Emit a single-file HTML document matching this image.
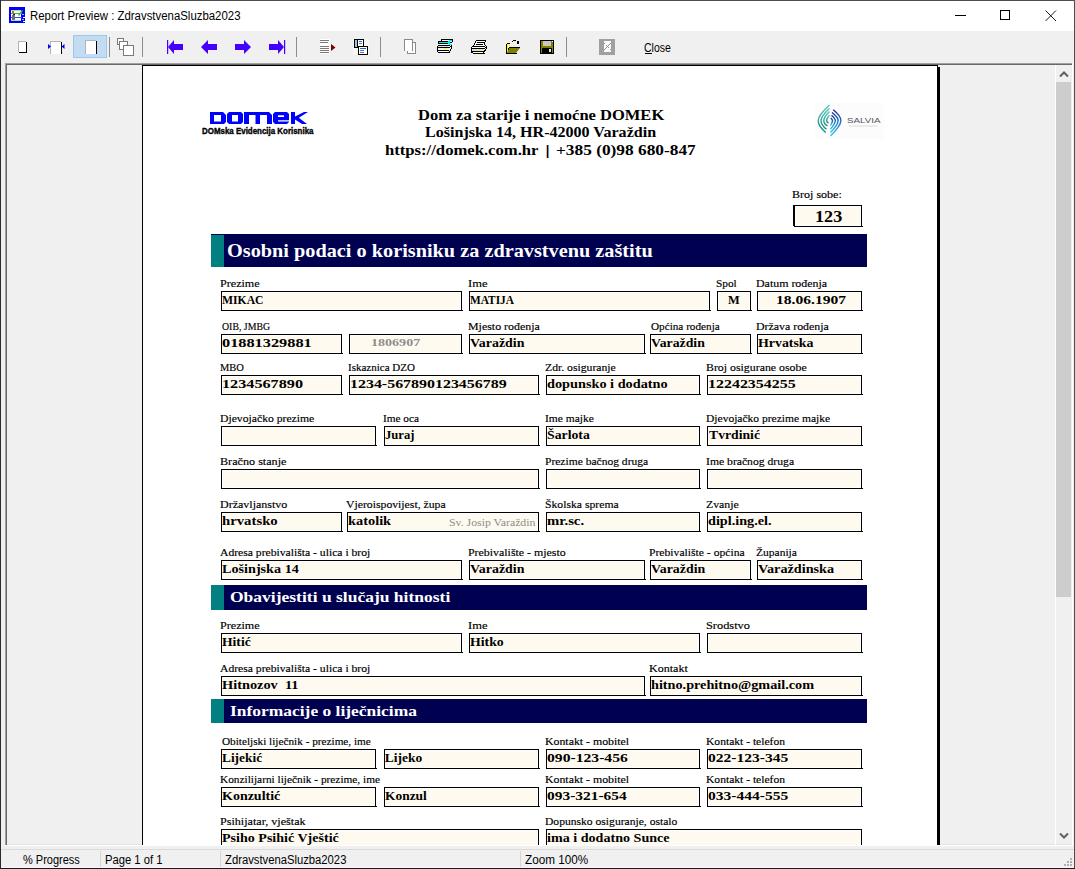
<!DOCTYPE html>
<html><head><meta charset="utf-8"><style>
html,body{margin:0;padding:0;width:1075px;height:869px;overflow:hidden;background:#f0f0f0;position:relative}
.tx{position:absolute;white-space:pre;line-height:normal;transform-origin:0 0}
.fb{position:absolute;box-sizing:border-box;background:#fffaf0;border:1px solid #000;box-shadow:inset 0 0 0 1px #fff}
.r{position:absolute}
</style></head><body>
<!-- window frame -->
<div class="r" style="left:0;top:0;width:1075px;height:31px;background:#fff"></div>
<div class="r" style="left:0;top:0;width:1075px;height:1px;background:#4d4d4d"></div>
<div class="r" style="left:0;top:0;width:1px;height:869px;background:#2b2b2b"></div>
<div class="r" style="left:1074px;top:0;width:1px;height:869px;background:#4d4d4d"></div>
<div class="r" style="left:0;top:868px;width:1075px;height:1px;background:#1a1a1a"></div>
<!-- app icon -->
<svg class="r" style="left:9px;top:7px" width="17" height="17" viewBox="0 0 17 17" shape-rendering="crispEdges">
<rect x="0" y="0" width="16" height="16" fill="#0000ff"/>
<rect x="2" y="3" width="10" height="11" fill="#fff"/>
<rect x="2" y="3" width="10" height="1" fill="#a8e0a0"/>
<rect x="2" y="6" width="11" height="1" fill="#40b040"/>
<rect x="2" y="10" width="11" height="1" fill="#4040ff"/>
<rect x="2" y="13" width="10" height="1" fill="#a8e0a0"/>
<rect x="3" y="4" width="2" height="2" fill="#ff4060"/>
<rect x="3" y="8" width="3" height="5" fill="#707070"/>
<rect x="4" y="7" width="2" height="1" fill="#202020"/>
<path d="M9 8 L13 3 L14 4 L10 9 Z" fill="#40b040" shape-rendering="auto"/>
<rect x="13" y="7" width="2" height="1" fill="#c0b0ff"/>
<rect x="14" y="10" width="2" height="1" fill="#fff"/>
<rect x="13" y="12" width="2" height="1" fill="#c0b0ff"/>
<rect x="14" y="14" width="2" height="1" fill="#fff"/>
</svg>
<!-- title controls -->
<div class="r" style="left:955px;top:15px;width:11px;height:1px;background:#000"></div>
<div class="r" style="left:1000px;top:10px;width:10px;height:10px;border:1px solid #000;box-sizing:border-box"></div>
<svg class="r" style="left:1044px;top:9px" width="14" height="13" viewBox="0 0 14 13"><path d="M1.5 1.5 L12 12 M12 1.5 L1.5 12" stroke="#000" stroke-width="0.9"/></svg>

<!-- toolbar -->
<svg class="r" style="left:0;top:31px" width="700" height="30" viewBox="0 31 700 30" shape-rendering="crispEdges">
<!-- icon1 -->
<rect x="18" y="41" width="8" height="11" fill="#b4b4b4"/>
<rect x="19" y="42" width="7" height="10" fill="#fff"/>
<rect x="26" y="42" width="1" height="11" fill="#000"/>
<rect x="19" y="52" width="8" height="1" fill="#000"/>
<!-- icon2 -->
<rect x="50" y="41" width="11" height="13" fill="#b4b4b4"/>
<rect x="51" y="42" width="10" height="12" fill="#fff"/>
<rect x="61" y="42" width="1" height="12" fill="#000"/>
<path d="M48 44 L51 46.5 L48 49 Z" fill="#0000ff" shape-rendering="auto"/>
<path d="M64.5 44 L61.5 46.5 L64.5 49 Z" fill="#0000ff" shape-rendering="auto"/>
<!-- icon3 selected -->
<rect x="73" y="35" width="34" height="23" fill="#99c9f3"/>
<rect x="74" y="36" width="32" height="21" fill="#c4dcf1"/>
<rect x="85" y="40" width="11" height="14" fill="#b4b4b4"/>
<rect x="86" y="41" width="10" height="13" fill="#fff"/>
<rect x="96" y="41" width="1" height="13" fill="#000"/>
<!-- sep -->
<rect x="109" y="37" width="1" height="20" fill="#8c8c8c"/>
<!-- icon4 -->
<rect x="117.5" y="38.5" width="6" height="6" fill="#fff" stroke="#7a7a7a" shape-rendering="auto"/>
<rect x="119.5" y="41.5" width="8" height="8" fill="#fff" stroke="#7a7a7a" shape-rendering="auto"/>
<rect x="123.5" y="45.5" width="10" height="10" fill="#fff" stroke="#7a7a7a" shape-rendering="auto"/>
<rect x="142" y="37" width="1" height="20" fill="#8c8c8c"/>
<!-- arrows -->
<g fill="#4400ff" shape-rendering="auto">
<rect x="167" y="40" width="1.2" height="14"/>
<path d="M168 47 L174 40 L174 44 L183 44 L183 50 L174 50 L174 54 Z"/>
<path d="M201 47 L208 40 L208 44 L217 44 L217 50 L208 50 L208 54 Z"/>
<path d="M251 47 L244 40 L244 44 L235 44 L235 50 L244 50 L244 54 Z"/>
<path d="M284 47 L278 40 L278 44 L269 44 L269 50 L278 50 L278 54 Z"/>
<rect x="284" y="40" width="1.2" height="14"/>
</g>
<rect x="296" y="37" width="1" height="20" fill="#8c8c8c"/>
<!-- lines icon -->
<rect x="320" y="39" width="10" height="15" fill="#fff"/>
<g fill="#7a7a7a">
<rect x="320" y="40" width="9" height="1"/>
<rect x="320" y="42" width="8" height="1"/>
<rect x="320" y="46" width="9" height="1"/>
<rect x="320" y="48" width="9" height="1"/>
<rect x="320" y="50" width="9" height="1"/>
<rect x="320" y="52" width="9" height="1"/>
</g>
<path d="M331 44 L335.5 47.5 L331 51 Z" fill="#800000" shape-rendering="auto"/>
<!-- page setup icon -->
<rect x="353" y="39" width="16" height="16" fill="#f7f7f7"/>
<rect x="354" y="39" width="10" height="9" fill="#000"/>
<rect x="355" y="40" width="2" height="7" fill="#9cc3f0"/>
<rect x="358" y="40" width="5" height="7" fill="#fff"/>
<rect x="359" y="41" width="3" height="1" fill="#0a6cff"/>
<rect x="359" y="43" width="3" height="1" fill="#777"/>
<rect x="358" y="46" width="10" height="9" fill="#000"/>
<rect x="359" y="47" width="8" height="7" fill="#fff"/>
<rect x="360" y="48" width="6" height="1" fill="#0a6cff"/>
<rect x="360" y="50" width="4" height="1" fill="#777"/>
<rect x="360" y="52" width="4" height="1" fill="#777"/>
<rect x="380" y="37" width="1" height="20" fill="#8c8c8c"/>
<!-- copy icon -->
<g fill="#8a8a8a">
<rect x="404" y="39" width="9" height="1"/>
<rect x="404" y="39" width="1" height="12"/>
<rect x="412" y="39" width="1" height="12"/>
<rect x="412" y="42" width="4" height="1"/>
<rect x="415" y="42" width="1" height="12"/>
<rect x="407" y="53" width="9" height="1"/>
<rect x="407" y="51" width="1" height="3"/>
</g>
<rect x="405" y="40" width="7" height="11" fill="#fff"/>
<rect x="413" y="43" width="2" height="10" fill="#fff"/>
<rect x="408" y="51" width="4" height="2" fill="#fff"/>
<!-- printer setup -->
<g>
<rect x="441" y="39" width="8" height="1" fill="#000"/>
<rect x="441" y="40" width="1" height="2" fill="#000"/>
<rect x="442" y="40" width="7" height="1" fill="#fff"/>
<rect x="438" y="41" width="11" height="1" fill="#000"/>
<rect x="438" y="42" width="1" height="1" fill="#000"/>
<rect x="439" y="42" width="10" height="1.3" fill="#00f0f0"/>
<rect x="438" y="43" width="11" height="1" fill="#000"/>
<rect x="449" y="39" width="4" height="1" fill="#000"/>
<rect x="449" y="40" width="3" height="1" fill="#00f0f0"/>
<rect x="452" y="40" width="1" height="2" fill="#000"/>
<rect x="448" y="41" width="1.5" height="3" fill="#00f0f0"/>
<rect x="449" y="44" width="3" height="1" fill="#00f0f0"/>
<rect x="450" y="42" width="2" height="1" fill="#000"/>
<rect x="440" y="44" width="8" height="1" fill="#fff"/>
<rect x="438" y="45" width="12" height="1" fill="#000"/>
<rect x="437" y="46" width="1" height="6" fill="#000"/>
<rect x="438" y="46" width="10" height="1" fill="#e0e0e0"/>
<rect x="438" y="47" width="11" height="1" fill="#000"/>
<rect x="438" y="48" width="11" height="2" fill="#f4f4f4"/>
<rect x="444" y="48" width="3" height="1" fill="#ffff00"/>
<rect x="438" y="50" width="11" height="1" fill="#000"/>
<rect x="439" y="51" width="9" height="1" fill="#fff"/>
<rect x="438" y="52" width="11" height="1" fill="#000"/>
<rect x="449" y="45" width="1" height="1" fill="#000"/>
<rect x="450" y="46" width="1" height="1" fill="#000"/>
<rect x="451" y="45" width="1" height="4" fill="#000"/>
<rect x="449" y="47" width="1" height="1" fill="#000"/>
<rect x="450" y="49" width="1" height="2" fill="#000"/>
<rect x="449" y="51" width="1" height="1" fill="#000"/>
<rect x="448" y="52" width="2" height="1" fill="#000"/>
</g>
<!-- printer -->
<g>
<rect x="476" y="40" width="10" height="1" fill="#000"/>
<rect x="475" y="41" width="1" height="2" fill="#000"/>
<rect x="474" y="43" width="1" height="2" fill="#000"/>
<rect x="476" y="41" width="9" height="5" fill="#fff"/>
<rect x="475" y="43" width="1" height="2" fill="#fff"/>
<rect x="477" y="42" width="7" height="1" fill="#000"/>
<rect x="476" y="44" width="7" height="1" fill="#000"/>
<rect x="485" y="41" width="1" height="1" fill="#000"/>
<rect x="484" y="42" width="1" height="3" fill="#000"/>
<rect x="473" y="45" width="1" height="1" fill="#000"/>
<rect x="472" y="46" width="12" height="1" fill="#000"/>
<rect x="471" y="47" width="1" height="6" fill="#000"/>
<rect x="472" y="47" width="12" height="1" fill="#fff"/>
<rect x="472" y="48" width="12" height="1" fill="#000"/>
<rect x="472" y="49" width="12" height="2" fill="#dcdcdc"/>
<rect x="478" y="50" width="3" height="1" fill="#ffff00"/>
<rect x="472" y="51" width="12" height="1" fill="#000"/>
<rect x="473" y="52" width="10" height="1" fill="#fff"/>
<rect x="472" y="52" width="1" height="1" fill="#000"/>
<rect x="473" y="53" width="12" height="1" fill="#000"/>
<rect x="484" y="46" width="1" height="1" fill="#000"/>
<rect x="485" y="45" width="1" height="1" fill="#000"/>
<rect x="486" y="46" width="1" height="3" fill="#000"/>
<rect x="485" y="47" width="1" height="1" fill="#000"/>
<rect x="484" y="48" width="1" height="1" fill="#000"/>
<rect x="485" y="49" width="1" height="2" fill="#000"/>
<rect x="484" y="50" width="1" height="1" fill="#000"/>
<rect x="483" y="52" width="1" height="1" fill="#000"/>
<rect x="484" y="51" width="1" height="1" fill="#000"/>
</g>
<!-- open folder -->
<g>
<rect x="506" y="44" width="1" height="10" fill="#000"/>
<rect x="507" y="43" width="3" height="1" fill="#000"/>
<rect x="507" y="44" width="1" height="9" fill="#ffff00"/>
<rect x="508" y="45" width="7" height="1" fill="#ffff00"/>
<rect x="509" y="44" width="1" height="1" fill="#fff"/>
<rect x="508" y="46" width="1" height="1" fill="#fff"/>
<rect x="510" y="45" width="1" height="1" fill="#fff"/>
<rect x="512" y="45" width="1" height="1" fill="#fff"/>
<rect x="509" y="47" width="11" height="1" fill="#000"/>
<path d="M509 48 L520 48 L516 53 L507 53 Z" fill="#808000" shape-rendering="auto"/>
<rect x="508" y="48" width="1" height="2" fill="#000"/>
<rect x="506" y="53" width="11" height="1" fill="#000"/>
<rect x="513" y="40" width="3" height="1" fill="#000"/>
<rect x="512" y="41" width="1" height="1" fill="#000"/>
<rect x="517" y="41" width="2" height="3" fill="#000"/>
</g>
<!-- save -->
<g>
<rect x="540" y="40" width="14" height="14" fill="#000"/>
<rect x="541" y="41" width="12" height="12" fill="#808000"/>
<rect x="543" y="41" width="8" height="5" fill="#c8c8c8"/>
<rect x="542" y="48" width="10" height="5" fill="#000"/>
<rect x="549" y="49" width="2" height="3" fill="#e8e8e8"/>
<rect x="552" y="41" width="1" height="1" fill="#fff"/>
</g>
<rect x="566" y="37" width="1" height="20" fill="#8c8c8c"/>
<!-- disabled -->
<rect x="599" y="39" width="16" height="16" fill="#a0a0a0"/>
<rect x="604" y="41" width="7" height="11" fill="#fafafa"/>
<g fill="#909090">
<rect x="604" y="43" width="1" height="1"/><rect x="610" y="43" width="1" height="1"/>
<rect x="609" y="44" width="1" height="1"/><rect x="608" y="45" width="1" height="1"/>
<rect x="606" y="45" width="1" height="1"/><rect x="607" y="46" width="1" height="1"/>
<rect x="606" y="47" width="1" height="1"/><rect x="608" y="47" width="1" height="1"/>
<rect x="605" y="48" width="1" height="1"/><rect x="604" y="49" width="1" height="1"/><rect x="610" y="49" width="1" height="1"/>
</g>
<!-- close underline -->
<rect x="645" y="53" width="7" height="1" fill="#000"/>
</svg>

<!-- frame -->
<div class="r" style="left:5px;top:63px;width:1068px;height:1px;background:#a0a0a0"></div>
<div class="r" style="left:5px;top:64px;width:1068px;height:1px;background:#696969"></div>
<div class="r" style="left:5px;top:63px;width:1px;height:783px;background:#a0a0a0"></div>
<div class="r" style="left:6px;top:64px;width:1px;height:781px;background:#696969"></div>
<div class="r" style="left:5px;top:845px;width:1068px;height:1px;background:#fff"></div>
<div class="r" style="left:1072px;top:63px;width:1px;height:783px;background:#fff"></div>
<div class="r" style="left:7px;top:844px;width:1065px;height:1px;background:#e3e3e3"></div>

<!-- scrollbar -->
<div class="r" style="left:1055px;top:65px;width:1px;height:780px;background:#fff"></div>
<div class="r" style="left:1056px;top:82px;width:15px;height:515px;background:#cdcdcd"></div>
<svg class="r" style="left:1058px;top:69px" width="12" height="10" viewBox="0 0 12 10"><path d="M2 7.5 L6 3.5 L10 7.5" stroke="#606060" stroke-width="2" fill="none"/></svg>
<svg class="r" style="left:1058px;top:831px" width="12" height="10" viewBox="0 0 12 10"><path d="M2 2.5 L6 6.5 L10 2.5" stroke="#606060" stroke-width="2" fill="none"/></svg>

<!-- status bar -->
<div class="r" style="left:1px;top:849px;width:1073px;height:1px;background:#dadada"></div>
<div class="r" style="left:100px;top:851px;width:1px;height:16px;background:#d5d5d5"></div>
<div class="r" style="left:220px;top:851px;width:1px;height:16px;background:#d5d5d5"></div>
<div class="r" style="left:520px;top:851px;width:1px;height:16px;background:#d5d5d5"></div>
<div class="r" style="left:1px;top:867px;width:1073px;height:1px;background:#f8f8f8"></div>
<svg class="r" style="left:1063px;top:856px" width="10" height="11" viewBox="1063 856 10 11" shape-rendering="crispEdges">
<g fill="#b0b0b0">
<rect x="1070" y="858" width="2" height="2"/>
<rect x="1067" y="861" width="2" height="2"/><rect x="1070" y="861" width="2" height="2"/>
<rect x="1064" y="864" width="2" height="2"/><rect x="1067" y="864" width="2" height="2"/><rect x="1070" y="864" width="2" height="2"/>
</g></svg>

<div id="view" style="position:absolute;left:0;top:0;width:1075px;height:845px;overflow:hidden">
<div class="r" style="left:142px;top:65px;width:795px;height:800px;background:#fff;border-left:1px solid #000;border-top:1px solid #000;box-sizing:border-box"></div>
<div class="r" style="left:937px;top:65px;width:1px;height:800px;background:#000"></div><div class="r" style="left:938px;top:67px;width:2px;height:800px;background:#000"></div>
<!-- bars -->
<div class="r" style="left:211px;top:234px;width:656px;height:33px;background:#000050"></div>
<div class="r" style="left:211px;top:235px;width:13px;height:32px;background:#008080"></div>
<div class="r" style="left:211px;top:585px;width:656px;height:25px;background:#000050"></div>
<div class="r" style="left:211px;top:585px;width:13px;height:25px;background:#008080"></div>
<div class="r" style="left:211px;top:699px;width:656px;height:24px;background:#000050"></div>
<div class="r" style="left:211px;top:699px;width:13px;height:24px;background:#008080"></div>
<!-- DOMEK logo -->
<svg class="r" style="left:209px;top:111px" width="100" height="15" viewBox="0 0 100 15">
<g fill="#0000ff" fill-rule="evenodd">
<path d="M1 1 H14 L17 4 V11 L15 13 H1 Z M5 4 H12 V10.5 H5 Z"/>
<path d="M20 1 H32 L34 3 V11 L32 13 H20 L18 11 V3 Z M23 4 H29 V10.5 H23 Z"/>
<path d="M35 13 V1 H60 L63 4 V13 H58 V4 H51 V13 H46.5 V4 H40 V13 Z"/>
<path d="M66 1 H78 L80 3 V9.2 H69 V10.4 H80 V11 L78 13 H66 L64 11 V3 Z M69 4.3 H75 V6 H69 Z"/>
<path d="M82 1 H86 V5.6 L95 1 H99 L89.8 6.8 L98 13 H93 L86 8.6 V13 H82 Z"/>
</g>
</svg>
<!-- Salvia logo -->
<svg class="r" style="left:815px;top:103px" width="70" height="37" viewBox="0 0 70 37">
<rect x="0" y="0" width="69" height="36" fill="#fcfcfc"/>
<defs>
<linearGradient id="sl" x1="0" y1="0" x2="0" y2="1"><stop offset="0" stop-color="#5cc8c0"/><stop offset="1" stop-color="#119080"/></linearGradient>
<linearGradient id="sr" x1="0" y1="0" x2="0" y2="1"><stop offset="0" stop-color="#1a2a8c"/><stop offset="0.45" stop-color="#1a6ec4"/><stop offset="1" stop-color="#3cc8ee"/></linearGradient>
</defs>
<g fill="none" stroke="url(#sl)" stroke-width="1.4">
<path d="M14.5 2 C8 8 3.2 13 3.2 17.5 C3.2 22 6 25.5 10.8 29.5"/>
<path d="M14.5 5.2 C9.5 10 6 14 6 17.5 C6 21 8 23.5 11.5 26.3"/>
<path d="M14.5 8.6 C11 12 8.8 15 8.8 17.5 C8.8 20 10 21.5 12.5 22.8"/>
<path d="M14.5 12 C12.8 14 11.6 16 11.6 17.5 C11.6 19 12.2 19.5 13.5 20"/>
</g>
<g fill="none" stroke="url(#sr)" stroke-width="1.4">
<path d="M18.2 6.7 C23 10.5 25.9 14 25.9 17.5 C25.9 22 21.5 27 15.4 33"/>
<path d="M17 9.5 C21 12.5 23.1 15 23.1 17.5 C23.1 21 20 25 15.4 29.6"/>
<path d="M16.5 12.3 C19 14.5 20.3 16 20.3 17.5 C20.3 20.5 18.2 23 15.4 26.2"/>
<path d="M15.8 15 C17 16 17.5 16.8 17.5 17.8 C17.5 19.5 16.6 21 15.4 22.6"/>
</g>
<text x="32" y="20.2" font-family="'Liberation Sans', sans-serif" font-size="6.8" fill="#50545e" textLength="33.5" lengthAdjust="spacingAndGlyphs">SALVIA</text>
<rect x="34" y="22.5" width="28" height="1" fill="#dadada"/>
</svg>
<div class="r" style="left:793px;top:205px;width:1px;height:21px;background:#000"></div>

<div class="fb" style="left:794px;top:205px;width:68px;height:22px"></div><div class="r" style="left:862px;top:226px;width:1px;height:1px;background:#000"></div><div class="fb" style="left:221px;top:291px;width:241px;height:20px"></div><div class="r" style="left:462px;top:310px;width:1px;height:1px;background:#000"></div><div class="fb" style="left:469px;top:291px;width:241px;height:20px"></div><div class="r" style="left:710px;top:310px;width:1px;height:1px;background:#000"></div><div class="fb" style="left:717px;top:291px;width:34px;height:20px"></div><div class="r" style="left:751px;top:310px;width:1px;height:1px;background:#000"></div><div class="fb" style="left:757px;top:291px;width:105px;height:20px"></div><div class="r" style="left:862px;top:310px;width:1px;height:1px;background:#000"></div><div class="fb" style="left:221px;top:334px;width:121px;height:20px"></div><div class="r" style="left:342px;top:353px;width:1px;height:1px;background:#000"></div><div class="fb" style="left:349px;top:334px;width:113px;height:20px"></div><div class="r" style="left:462px;top:353px;width:1px;height:1px;background:#000"></div><div class="fb" style="left:469px;top:334px;width:176px;height:20px"></div><div class="r" style="left:645px;top:353px;width:1px;height:1px;background:#000"></div><div class="fb" style="left:650px;top:334px;width:101px;height:20px"></div><div class="r" style="left:751px;top:353px;width:1px;height:1px;background:#000"></div><div class="fb" style="left:757px;top:334px;width:105px;height:20px"></div><div class="r" style="left:862px;top:353px;width:1px;height:1px;background:#000"></div><div class="fb" style="left:221px;top:375px;width:121px;height:20px"></div><div class="r" style="left:342px;top:394px;width:1px;height:1px;background:#000"></div><div class="fb" style="left:349px;top:375px;width:190px;height:20px"></div><div class="r" style="left:539px;top:394px;width:1px;height:1px;background:#000"></div><div class="fb" style="left:546px;top:375px;width:154px;height:20px"></div><div class="r" style="left:700px;top:394px;width:1px;height:1px;background:#000"></div><div class="fb" style="left:707px;top:375px;width:155px;height:20px"></div><div class="r" style="left:862px;top:394px;width:1px;height:1px;background:#000"></div><div class="fb" style="left:221px;top:426px;width:155px;height:20px"></div><div class="r" style="left:376px;top:445px;width:1px;height:1px;background:#000"></div><div class="fb" style="left:384px;top:426px;width:155px;height:20px"></div><div class="r" style="left:539px;top:445px;width:1px;height:1px;background:#000"></div><div class="fb" style="left:546px;top:426px;width:154px;height:20px"></div><div class="r" style="left:700px;top:445px;width:1px;height:1px;background:#000"></div><div class="fb" style="left:707px;top:426px;width:155px;height:20px"></div><div class="r" style="left:862px;top:445px;width:1px;height:1px;background:#000"></div><div class="fb" style="left:221px;top:469px;width:318px;height:20px"></div><div class="r" style="left:539px;top:488px;width:1px;height:1px;background:#000"></div><div class="fb" style="left:546px;top:469px;width:154px;height:20px"></div><div class="r" style="left:700px;top:488px;width:1px;height:1px;background:#000"></div><div class="fb" style="left:707px;top:469px;width:155px;height:20px"></div><div class="r" style="left:862px;top:488px;width:1px;height:1px;background:#000"></div><div class="fb" style="left:221px;top:512px;width:121px;height:20px"></div><div class="r" style="left:342px;top:531px;width:1px;height:1px;background:#000"></div><div class="fb" style="left:347px;top:512px;width:192px;height:20px"></div><div class="r" style="left:539px;top:531px;width:1px;height:1px;background:#000"></div><div class="fb" style="left:546px;top:512px;width:154px;height:20px"></div><div class="r" style="left:700px;top:531px;width:1px;height:1px;background:#000"></div><div class="fb" style="left:707px;top:512px;width:155px;height:20px"></div><div class="r" style="left:862px;top:531px;width:1px;height:1px;background:#000"></div><div class="fb" style="left:221px;top:560px;width:241px;height:20px"></div><div class="r" style="left:462px;top:579px;width:1px;height:1px;background:#000"></div><div class="fb" style="left:469px;top:560px;width:176px;height:20px"></div><div class="r" style="left:645px;top:579px;width:1px;height:1px;background:#000"></div><div class="fb" style="left:650px;top:560px;width:101px;height:20px"></div><div class="r" style="left:751px;top:579px;width:1px;height:1px;background:#000"></div><div class="fb" style="left:757px;top:560px;width:105px;height:20px"></div><div class="r" style="left:862px;top:579px;width:1px;height:1px;background:#000"></div><div class="fb" style="left:221px;top:633px;width:241px;height:20px"></div><div class="r" style="left:462px;top:652px;width:1px;height:1px;background:#000"></div><div class="fb" style="left:469px;top:633px;width:231px;height:20px"></div><div class="r" style="left:700px;top:652px;width:1px;height:1px;background:#000"></div><div class="fb" style="left:707px;top:633px;width:155px;height:20px"></div><div class="r" style="left:862px;top:652px;width:1px;height:1px;background:#000"></div><div class="fb" style="left:221px;top:676px;width:424px;height:20px"></div><div class="r" style="left:645px;top:695px;width:1px;height:1px;background:#000"></div><div class="fb" style="left:650px;top:676px;width:212px;height:20px"></div><div class="r" style="left:862px;top:695px;width:1px;height:1px;background:#000"></div><div class="fb" style="left:221px;top:749px;width:155px;height:20px"></div><div class="r" style="left:376px;top:768px;width:1px;height:1px;background:#000"></div><div class="fb" style="left:384px;top:749px;width:155px;height:20px"></div><div class="r" style="left:539px;top:768px;width:1px;height:1px;background:#000"></div><div class="fb" style="left:546px;top:749px;width:154px;height:20px"></div><div class="r" style="left:700px;top:768px;width:1px;height:1px;background:#000"></div><div class="fb" style="left:707px;top:749px;width:155px;height:20px"></div><div class="r" style="left:862px;top:768px;width:1px;height:1px;background:#000"></div><div class="fb" style="left:221px;top:787px;width:155px;height:20px"></div><div class="r" style="left:376px;top:806px;width:1px;height:1px;background:#000"></div><div class="fb" style="left:384px;top:787px;width:155px;height:20px"></div><div class="r" style="left:539px;top:806px;width:1px;height:1px;background:#000"></div><div class="fb" style="left:546px;top:787px;width:154px;height:20px"></div><div class="r" style="left:700px;top:806px;width:1px;height:1px;background:#000"></div><div class="fb" style="left:707px;top:787px;width:155px;height:20px"></div><div class="r" style="left:862px;top:806px;width:1px;height:1px;background:#000"></div><div class="fb" style="left:221px;top:829px;width:318px;height:20px"></div><div class="r" style="left:539px;top:848px;width:1px;height:1px;background:#000"></div><div class="fb" style="left:546px;top:829px;width:316px;height:20px"></div><div class="r" style="left:862px;top:848px;width:1px;height:1px;background:#000"></div>
<div class="tx" style="left:417.93px;top:106.00px;font-family:'Liberation Serif', serif;font-size:15.5px;font-weight:bold;color:#000;transform:scaleX(1.0652)">Dom za starije i nemoćne DOMEK</div><div class="tx" style="left:424.96px;top:123.00px;font-family:'Liberation Serif', serif;font-size:15.5px;font-weight:bold;color:#000;transform:scaleX(1.0360)">Lošinjska 14, HR-42000 Varaždin</div><div class="tx" style="left:384.93px;top:141.00px;font-family:'Liberation Serif', serif;font-size:15.5px;font-weight:bold;color:#000;transform:scaleX(1.0739)">https://domek.com.hr</div><div class="tx" style="left:544.80px;top:141.00px;font-family:'Liberation Serif', serif;font-size:15.5px;font-weight:bold;color:#000;transform:scaleX(1.5000)">|</div><div class="tx" style="left:556.38px;top:141.00px;font-family:'Liberation Serif', serif;font-size:15.5px;font-weight:bold;color:#000;transform:scaleX(1.1169)">+385 (0)98 680-847</div><div class="tx" style="left:202.07px;top:126.00px;font-family:'Liberation Sans', sans-serif;font-size:8.5px;font-weight:bold;color:#000;-webkit-text-stroke:0.35px #000;transform:scaleX(0.9328)">DOMska Evidencija Korisnika</div><div class="tx" style="left:792.25px;top:189.00px;font-family:'Liberation Serif', serif;font-size:10.5px;font-weight:normal;color:#000;-webkit-text-stroke:0.15px #000;transform:scaleX(1.1452)">Broj sobe:</div><div class="tx" style="left:814.90px;top:206.50px;font-family:'Liberation Serif', serif;font-size:16.5px;font-weight:bold;color:#000;transform:scaleX(1.1000)">123</div><div class="tx" style="left:226.63px;top:240.00px;font-family:'Liberation Serif', serif;font-size:19px;font-weight:bold;color:#fff;transform:scaleX(1.0668)">Osobni podaci o korisniku za zdravstvenu zaštitu</div><div class="tx" style="left:230.23px;top:589.00px;font-family:'Liberation Serif', serif;font-size:15px;font-weight:bold;color:#fff;transform:scaleX(1.1668)">Obavijestiti u slučaju hitnosti</div><div class="tx" style="left:230.40px;top:702.50px;font-family:'Liberation Serif', serif;font-size:14.5px;font-weight:bold;color:#fff;transform:scaleX(1.2026)">Informacije o liječnicima</div><div class="tx" style="left:220.29px;top:278.00px;font-family:'Liberation Serif', serif;font-size:10px;font-weight:normal;color:#000;-webkit-text-stroke:0.15px #000;transform:scaleX(1.2097)">Prezime</div><div class="tx" style="left:221.93px;top:292.00px;font-family:'Liberation Serif', serif;font-size:13.5px;font-weight:bold;color:#000;transform:scaleX(0.8652)">MIKAC</div><div class="tx" style="left:468.25px;top:278.00px;font-family:'Liberation Serif', serif;font-size:10px;font-weight:normal;color:#000;-webkit-text-stroke:0.15px #000;transform:scaleX(1.2500)">Ime</div><div class="tx" style="left:469.96px;top:292.00px;font-family:'Liberation Serif', serif;font-size:13.5px;font-weight:bold;color:#000;transform:scaleX(0.8412)">MATIJA</div><div class="tx" style="left:716.37px;top:278.00px;font-family:'Liberation Serif', serif;font-size:10px;font-weight:normal;color:#000;-webkit-text-stroke:0.15px #000;transform:scaleX(1.1294)">Spol</div><div class="tx" style="left:728.48px;top:292.00px;font-family:'Liberation Serif', serif;font-size:13.5px;font-weight:bold;color:#000;transform:scaleX(0.9182)">M</div><div class="tx" style="left:756.31px;top:278.00px;font-family:'Liberation Serif', serif;font-size:10px;font-weight:normal;color:#000;-webkit-text-stroke:0.15px #000;transform:scaleX(1.1914)">Datum rođenja</div><div class="tx" style="left:775.75px;top:292.00px;font-family:'Liberation Serif', serif;font-size:13.5px;font-weight:bold;color:#000;transform:scaleX(1.1542)">18.06.1907</div><div class="tx" style="left:221.50px;top:321.00px;font-family:'Liberation Serif', serif;font-size:10px;font-weight:normal;color:#000;-webkit-text-stroke:0.15px #000;transform:scaleX(0.9833)">OIB, JMBG</div><div class="tx" style="left:221.59px;top:335.00px;font-family:'Liberation Serif', serif;font-size:13.5px;font-weight:bold;color:#000;transform:scaleX(1.2083)">01881329881</div><div class="tx" style="left:371.42px;top:336.00px;font-family:'Liberation Serif', serif;font-size:11px;font-weight:bold;color:#8c8c8c;transform:scaleX(1.2784)">1806907</div><div class="tx" style="left:468.31px;top:321.00px;font-family:'Liberation Serif', serif;font-size:10px;font-weight:normal;color:#000;-webkit-text-stroke:0.15px #000;transform:scaleX(1.1915)">Mjesto rođenja</div><div class="tx" style="left:469.77px;top:335.00px;font-family:'Liberation Serif', serif;font-size:13.5px;font-weight:bold;color:#000;transform:scaleX(1.0314)">Varaždin</div><div class="tx" style="left:650.50px;top:321.00px;font-family:'Liberation Serif', serif;font-size:10px;font-weight:normal;color:#000;-webkit-text-stroke:0.15px #000;transform:scaleX(1.1197)">Općina rođenja</div><div class="tx" style="left:650.78px;top:335.00px;font-family:'Liberation Serif', serif;font-size:13.5px;font-weight:bold;color:#000;transform:scaleX(1.0196)">Varaždin</div><div class="tx" style="left:756.31px;top:321.00px;font-family:'Liberation Serif', serif;font-size:10px;font-weight:normal;color:#000;-webkit-text-stroke:0.15px #000;transform:scaleX(1.1867)">Država rođenja</div><div class="tx" style="left:757.77px;top:335.00px;font-family:'Liberation Serif', serif;font-size:13.5px;font-weight:bold;color:#000;transform:scaleX(1.0283)">Hrvatska</div><div class="tx" style="left:220.45px;top:362.00px;font-family:'Liberation Serif', serif;font-size:10px;font-weight:normal;color:#000;-webkit-text-stroke:0.15px #000;transform:scaleX(1.0476)">MBO</div><div class="tx" style="left:221.60px;top:376.00px;font-family:'Liberation Serif', serif;font-size:13.5px;font-weight:bold;color:#000;transform:scaleX(1.2000)">1234567890</div><div class="tx" style="left:348.40px;top:362.00px;font-family:'Liberation Serif', serif;font-size:10px;font-weight:normal;color:#000;-webkit-text-stroke:0.15px #000;transform:scaleX(1.1017)">Iskaznica DZO</div><div class="tx" style="left:349.62px;top:376.00px;font-family:'Liberation Serif', serif;font-size:13.5px;font-weight:bold;color:#000;transform:scaleX(1.1802)">1234-567890123456789</div><div class="tx" style="left:545.33px;top:362.00px;font-family:'Liberation Serif', serif;font-size:10px;font-weight:normal;color:#000;-webkit-text-stroke:0.15px #000;transform:scaleX(1.1695)">Zdr. osiguranje</div><div class="tx" style="left:546.74px;top:376.00px;font-family:'Liberation Serif', serif;font-size:13.5px;font-weight:bold;color:#000;transform:scaleX(1.0575)">dopunsko i dodatno</div><div class="tx" style="left:706.32px;top:362.00px;font-family:'Liberation Serif', serif;font-size:10px;font-weight:normal;color:#000;-webkit-text-stroke:0.15px #000;transform:scaleX(1.1845)">Broj osigurane osobe</div><div class="tx" style="left:707.62px;top:376.00px;font-family:'Liberation Serif', serif;font-size:13.5px;font-weight:bold;color:#000;transform:scaleX(1.1808)">12242354255</div><div class="tx" style="left:220.33px;top:413.00px;font-family:'Liberation Serif', serif;font-size:10px;font-weight:normal;color:#000;-webkit-text-stroke:0.15px #000;transform:scaleX(1.1671)">Djevojačko prezime</div><div class="tx" style="left:383.37px;top:413.00px;font-family:'Liberation Serif', serif;font-size:10px;font-weight:normal;color:#000;-webkit-text-stroke:0.15px #000;transform:scaleX(1.1258)">Ime oca</div><div class="tx" style="left:384.87px;top:427.00px;font-family:'Liberation Serif', serif;font-size:13.5px;font-weight:bold;color:#000;transform:scaleX(0.9333)">Juraj</div><div class="tx" style="left:545.35px;top:413.00px;font-family:'Liberation Serif', serif;font-size:10px;font-weight:normal;color:#000;-webkit-text-stroke:0.15px #000;transform:scaleX(1.1512)">Ime majke</div><div class="tx" style="left:546.78px;top:427.00px;font-family:'Liberation Serif', serif;font-size:13.5px;font-weight:bold;color:#000;transform:scaleX(1.0195)">Šarlota</div><div class="tx" style="left:706.35px;top:413.00px;font-family:'Liberation Serif', serif;font-size:10px;font-weight:normal;color:#000;-webkit-text-stroke:0.15px #000;transform:scaleX(1.1519)">Djevojačko prezime majke</div><div class="tx" style="left:708.80px;top:427.00px;font-family:'Liberation Serif', serif;font-size:13.5px;font-weight:bold;color:#000;transform:scaleX(1.0140)">Tvrdinić</div><div class="tx" style="left:220.28px;top:456.00px;font-family:'Liberation Serif', serif;font-size:10px;font-weight:normal;color:#000;-webkit-text-stroke:0.15px #000;transform:scaleX(1.2151)">Bračno stanje</div><div class="tx" style="left:545.35px;top:456.00px;font-family:'Liberation Serif', serif;font-size:10px;font-weight:normal;color:#000;-webkit-text-stroke:0.15px #000;transform:scaleX(1.1534)">Prezime bačnog druga</div><div class="tx" style="left:706.33px;top:456.00px;font-family:'Liberation Serif', serif;font-size:10px;font-weight:normal;color:#000;-webkit-text-stroke:0.15px #000;transform:scaleX(1.1662)">Ime bračnog druga</div><div class="tx" style="left:220.30px;top:499.00px;font-family:'Liberation Serif', serif;font-size:10px;font-weight:normal;color:#000;-webkit-text-stroke:0.15px #000;transform:scaleX(1.2000)">Državljanstvo</div><div class="tx" style="left:221.71px;top:513.00px;font-family:'Liberation Serif', serif;font-size:13.5px;font-weight:bold;color:#000;transform:scaleX(1.0920)">hrvatsko</div><div class="tx" style="left:346.33px;top:499.00px;font-family:'Liberation Serif', serif;font-size:10px;font-weight:normal;color:#000;-webkit-text-stroke:0.15px #000;transform:scaleX(1.1726)">Vjeroispovijest, župa</div><div class="tx" style="left:347.74px;top:513.00px;font-family:'Liberation Serif', serif;font-size:13.5px;font-weight:bold;color:#000;transform:scaleX(1.0641)">katolik</div><div class="tx" style="left:449.08px;top:517.00px;font-family:'Liberation Serif', serif;font-size:10.5px;font-weight:normal;color:#8c8c8c;transform:scaleX(1.1224)">Sv. Josip Varaždin</div><div class="tx" style="left:545.33px;top:499.00px;font-family:'Liberation Serif', serif;font-size:10px;font-weight:normal;color:#000;-webkit-text-stroke:0.15px #000;transform:scaleX(1.1694)">Školska sprema</div><div class="tx" style="left:546.71px;top:513.00px;font-family:'Liberation Serif', serif;font-size:13.5px;font-weight:bold;color:#000;transform:scaleX(1.0906)">mr.sc.</div><div class="tx" style="left:706.32px;top:499.00px;font-family:'Liberation Serif', serif;font-size:10px;font-weight:normal;color:#000;-webkit-text-stroke:0.15px #000;transform:scaleX(1.1808)">Zvanje</div><div class="tx" style="left:707.75px;top:513.00px;font-family:'Liberation Serif', serif;font-size:13.5px;font-weight:bold;color:#000;transform:scaleX(1.0508)">dipl.ing.el.</div><div class="tx" style="left:220.34px;top:547.00px;font-family:'Liberation Serif', serif;font-size:10px;font-weight:normal;color:#000;-webkit-text-stroke:0.15px #000;transform:scaleX(1.1638)">Adresa prebivališta - ulica i broj</div><div class="tx" style="left:221.75px;top:561.00px;font-family:'Liberation Serif', serif;font-size:13.5px;font-weight:bold;color:#000;transform:scaleX(1.0500)">Lošinjska 14</div><div class="tx" style="left:468.31px;top:547.00px;font-family:'Liberation Serif', serif;font-size:10px;font-weight:normal;color:#000;-webkit-text-stroke:0.15px #000;transform:scaleX(1.1877)">Prebivalište - mjesto</div><div class="tx" style="left:469.77px;top:561.00px;font-family:'Liberation Serif', serif;font-size:13.5px;font-weight:bold;color:#000;transform:scaleX(1.0314)">Varaždin</div><div class="tx" style="left:649.34px;top:547.00px;font-family:'Liberation Serif', serif;font-size:10px;font-weight:normal;color:#000;-webkit-text-stroke:0.15px #000;transform:scaleX(1.1642)">Prebivalište - općina</div><div class="tx" style="left:650.77px;top:561.00px;font-family:'Liberation Serif', serif;font-size:13.5px;font-weight:bold;color:#000;transform:scaleX(1.0275)">Varaždin</div><div class="tx" style="left:756.35px;top:547.00px;font-family:'Liberation Serif', serif;font-size:10px;font-weight:normal;color:#000;-webkit-text-stroke:0.15px #000;transform:scaleX(1.1500)">Županija</div><div class="tx" style="left:757.75px;top:561.00px;font-family:'Liberation Serif', serif;font-size:13.5px;font-weight:bold;color:#000;transform:scaleX(1.0535)">Varaždinska</div><div class="tx" style="left:220.29px;top:619.50px;font-family:'Liberation Serif', serif;font-size:10px;font-weight:normal;color:#000;-webkit-text-stroke:0.15px #000;transform:scaleX(1.2097)">Prezime</div><div class="tx" style="left:221.79px;top:634.00px;font-family:'Liberation Serif', serif;font-size:13.5px;font-weight:bold;color:#000;transform:scaleX(1.0074)">Hitić</div><div class="tx" style="left:468.25px;top:619.50px;font-family:'Liberation Serif', serif;font-size:10px;font-weight:normal;color:#000;-webkit-text-stroke:0.15px #000;transform:scaleX(1.2500)">Ime</div><div class="tx" style="left:469.78px;top:634.00px;font-family:'Liberation Serif', serif;font-size:13.5px;font-weight:bold;color:#000;transform:scaleX(1.0219)">Hitko</div><div class="tx" style="left:706.26px;top:619.50px;font-family:'Liberation Serif', serif;font-size:10px;font-weight:normal;color:#000;-webkit-text-stroke:0.15px #000;transform:scaleX(1.2353)">Srodstvo</div><div class="tx" style="left:220.34px;top:663.00px;font-family:'Liberation Serif', serif;font-size:10px;font-weight:normal;color:#000;-webkit-text-stroke:0.15px #000;transform:scaleX(1.1638)">Adresa prebivališta - ulica i broj</div><div class="tx" style="left:221.74px;top:677.00px;font-family:'Liberation Serif', serif;font-size:13.5px;font-weight:bold;color:#000;transform:scaleX(1.0629)">Hitnozov  11</div><div class="tx" style="left:649.30px;top:663.00px;font-family:'Liberation Serif', serif;font-size:10px;font-weight:normal;color:#000;-webkit-text-stroke:0.15px #000;transform:scaleX(1.2032)">Kontakt</div><div class="tx" style="left:650.75px;top:677.00px;font-family:'Liberation Serif', serif;font-size:13.5px;font-weight:bold;color:#000;transform:scaleX(1.0529)">hitno.prehitno@gmail.com</div><div class="tx" style="left:221.50px;top:736.00px;font-family:'Liberation Serif', serif;font-size:10px;font-weight:normal;color:#000;-webkit-text-stroke:0.15px #000;transform:scaleX(1.1235)">Obiteljski liječnik - prezime, ime</div><div class="tx" style="left:221.81px;top:750.00px;font-family:'Liberation Serif', serif;font-size:13.5px;font-weight:bold;color:#000;transform:scaleX(0.9897)">Lijekić</div><div class="tx" style="left:384.80px;top:750.00px;font-family:'Liberation Serif', serif;font-size:13.5px;font-weight:bold;color:#000;transform:scaleX(1.0000)">Lijeko</div><div class="tx" style="left:545.32px;top:736.00px;font-family:'Liberation Serif', serif;font-size:10px;font-weight:normal;color:#000;-webkit-text-stroke:0.15px #000;transform:scaleX(1.1826)">Kontakt - mobitel</div><div class="tx" style="left:546.64px;top:750.00px;font-family:'Liberation Serif', serif;font-size:13.5px;font-weight:bold;color:#000;transform:scaleX(1.1588)">090-123-456</div><div class="tx" style="left:706.34px;top:736.00px;font-family:'Liberation Serif', serif;font-size:10px;font-weight:normal;color:#000;-webkit-text-stroke:0.15px #000;transform:scaleX(1.1567)">Kontakt - telefon</div><div class="tx" style="left:707.65px;top:750.00px;font-family:'Liberation Serif', serif;font-size:13.5px;font-weight:bold;color:#000;transform:scaleX(1.1500)">022-123-345</div><div class="tx" style="left:220.37px;top:774.00px;font-family:'Liberation Serif', serif;font-size:10px;font-weight:normal;color:#000;-webkit-text-stroke:0.15px #000;transform:scaleX(1.1321)">Konzilijarni liječnik - prezime, ime</div><div class="tx" style="left:221.76px;top:788.00px;font-family:'Liberation Serif', serif;font-size:13.5px;font-weight:bold;color:#000;transform:scaleX(1.0364)">Konzultić</div><div class="tx" style="left:384.80px;top:788.00px;font-family:'Liberation Serif', serif;font-size:13.5px;font-weight:bold;color:#000;transform:scaleX(0.9951)">Konzul</div><div class="tx" style="left:545.32px;top:774.00px;font-family:'Liberation Serif', serif;font-size:10px;font-weight:normal;color:#000;-webkit-text-stroke:0.15px #000;transform:scaleX(1.1826)">Kontakt - mobitel</div><div class="tx" style="left:546.66px;top:788.00px;font-family:'Liberation Serif', serif;font-size:13.5px;font-weight:bold;color:#000;transform:scaleX(1.1420)">093-321-654</div><div class="tx" style="left:706.34px;top:774.00px;font-family:'Liberation Serif', serif;font-size:10px;font-weight:normal;color:#000;-webkit-text-stroke:0.15px #000;transform:scaleX(1.1567)">Kontakt - telefon</div><div class="tx" style="left:707.65px;top:788.00px;font-family:'Liberation Serif', serif;font-size:13.5px;font-weight:bold;color:#000;transform:scaleX(1.1500)">033-444-555</div><div class="tx" style="left:220.29px;top:815.50px;font-family:'Liberation Serif', serif;font-size:10px;font-weight:normal;color:#000;-webkit-text-stroke:0.15px #000;transform:scaleX(1.2101)">Psihijatar, vještak</div><div class="tx" style="left:221.76px;top:830.00px;font-family:'Liberation Serif', serif;font-size:13.5px;font-weight:bold;color:#000;transform:scaleX(1.0405)">Psiho Psihić Vještić</div><div class="tx" style="left:545.34px;top:815.50px;font-family:'Liberation Serif', serif;font-size:10px;font-weight:normal;color:#000;-webkit-text-stroke:0.15px #000;transform:scaleX(1.1593)">Dopunsko osiguranje, ostalo</div><div class="tx" style="left:546.76px;top:830.00px;font-family:'Liberation Serif', serif;font-size:13.5px;font-weight:bold;color:#000;transform:scaleX(1.0440)">ima i dodatno Sunce</div>
</div>
<div class="tx" style="left:29.55px;top:9.00px;font-family:'Liberation Sans', sans-serif;font-size:12px;font-weight:normal;color:#000;transform:scaleX(0.9505)">Report Preview : ZdravstvenaSluzba2023</div><div class="tx" style="left:22.90px;top:852.50px;font-family:'Liberation Sans', sans-serif;font-size:12px;font-weight:normal;color:#000;transform:scaleX(0.9161)">% Progress</div><div class="tx" style="left:104.66px;top:852.50px;font-family:'Liberation Sans', sans-serif;font-size:12px;font-weight:normal;color:#000;transform:scaleX(0.9367)">Page 1 of 1</div><div class="tx" style="left:225.00px;top:852.50px;font-family:'Liberation Sans', sans-serif;font-size:12px;font-weight:normal;color:#000;transform:scaleX(0.9380)">ZdravstvenaSluzba2023</div><div class="tx" style="left:525.20px;top:852.50px;font-family:'Liberation Sans', sans-serif;font-size:12px;font-weight:normal;color:#000;transform:scaleX(0.9766)">Zoom 100%</div><div class="tx" style="left:643.72px;top:41.00px;font-family:'Liberation Sans', sans-serif;font-size:12px;font-weight:normal;color:#000;transform:scaleX(0.8759)">Close</div>
</body></html>
